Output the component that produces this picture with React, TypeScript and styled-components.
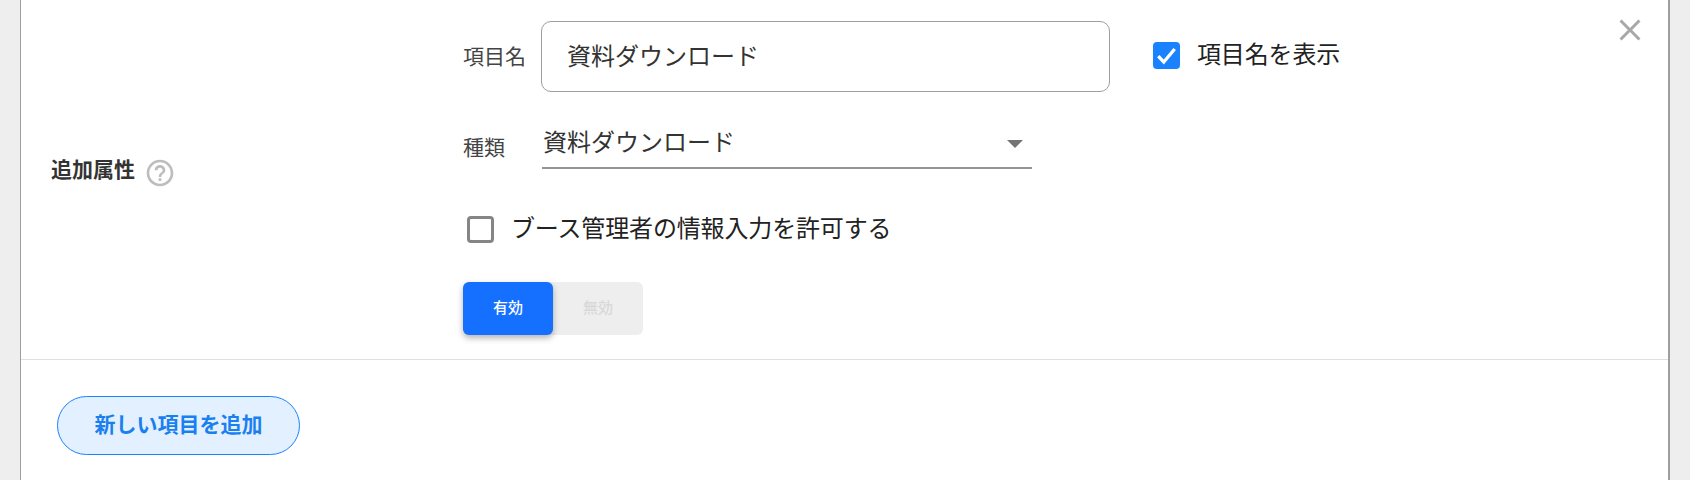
import React from 'react'
import styled, { createGlobalStyle } from 'styled-components'
import { MdClose, MdHelpOutline } from 'react-icons/md'

const GlobalStyle = createGlobalStyle`
  html, body {
    margin: 0;
    padding: 0;
    background: #eeeeee;
    font-family: "Noto Sans CJK JP", "Liberation Sans", sans-serif;
  }
`

const Page = styled.div`
  width: 1690px;
  height: 480px;
  overflow: hidden;
  padding: 0 20px;
  box-sizing: border-box;
`

const Card = styled.div`
  height: 100%;
  background: #fff;
  border-left: 1px solid #9e9e9e;
  border-right: 2px solid #9e9e9e;
`

const AttributeRow = styled.div`
  position: relative;
  display: grid;
  grid-template-columns: 442px 1fr;
  height: 360px;
  box-sizing: border-box;
  padding-top: 21px;
  border-bottom: 1px solid #e0e0e0;
`

const RowTitle = styled.div`
  display: flex;
  align-items: center;
  gap: 9px;
  padding: 0 0 35px 30px;
  font-size: 21px;
  font-weight: 700;
  color: #333;
`

const TitleText = styled.span`
  padding-bottom: 9px;
`

const HelpIcon = styled(MdHelpOutline)`
  font-size: 32px;
  color: #bdbdbd;
`

const Fields = styled.div`
  display: flex;
  flex-direction: column;
  align-items: flex-start;
`

const NameRow = styled.div`
  display: flex;
  align-items: center;
`

const FieldLabel = styled.label<{ $width: number; $shift: number }>`
  width: ${props => props.$width}px;
  flex: none;
  font-size: 21px;
  line-height: 28px;
  color: #444;
  transform: translateY(${props => props.$shift}px);
`

const NameInput = styled.div`
  width: 569px;
  height: 71px;
  box-sizing: border-box;
  display: flex;
  align-items: center;
  padding: 0 0 4px 25px;
  border: 1px solid #9e9e9e;
  border-radius: 10px;
  font-size: 24px;
  color: #333;
`

const CheckField = styled.div<{ $gap: number; $left: number; $lift: number }>`
  display: flex;
  align-items: center;
  gap: ${props => props.$gap}px;
  margin-left: ${props => props.$left}px;
  margin-top: ${props => -props.$lift}px;
  font-size: 24px;
  letter-spacing: -0.15px;
  color: #222;
`

const CheckText = styled.span`
  line-height: 30px;
  padding-bottom: 4px;
`

const Box = styled.span<{ $checked?: boolean }>`
  flex: none;
  width: 27px;
  height: 27px;
  box-sizing: border-box;
  display: flex;
  align-items: center;
  justify-content: center;
  border-radius: 4px;
  background: ${props => (props.$checked ? '#1a82ff' : '#fff')};
  border: ${props => (props.$checked ? 'none' : '3px solid #858585')};
`

const TypeRow = styled.div`
  display: flex;
  align-items: center;
  margin-top: 26px;
`

const TypeSelect = styled.div`
  width: 490px;
  height: 51px;
  box-sizing: border-box;
  display: flex;
  align-items: center;
  justify-content: space-between;
  padding: 0 9px 5px 1px;
  border-bottom: 2px solid #949494;
  font-size: 24px;
  color: #333;
`

const Arrow = styled.span`
  width: 0;
  height: 0;
  margin-top: 7px;
  border-left: 8px solid transparent;
  border-right: 8px solid transparent;
  border-top: 8px solid #757575;
`

const PermissionRow = styled.div`
  margin-top: 43px;
`

const Toggle = styled.div`
  display: flex;
  margin-top: 36px;
  border-radius: 6px;
  background: #eeeeee;
`

const ToggleOption = styled.div<{ $active?: boolean }>`
  width: 90px;
  height: 53px;
  box-sizing: border-box;
  padding-bottom: 4px;
  display: flex;
  align-items: center;
  justify-content: center;
  border-radius: 6px;
  font-size: 15px;
  font-weight: 500;
  background: ${props => (props.$active ? '#1570ff' : 'transparent')};
  color: ${props => (props.$active ? '#fff' : '#d8d8d8')};
  box-shadow: ${props => (props.$active ? '0 3px 6px rgba(0, 0, 0, 0.3)' : 'none')};
`

const CloseButton = styled(MdClose)`
  position: absolute;
  top: 12px;
  right: 20px;
  font-size: 36px;
  color: #a8a8a8;
`

const Footer = styled.div`
  padding: 36px 0 0 36px;
`

const AddButton = styled.button`
  width: 243px;
  height: 59px;
  padding: 0 0 5px;
  border: 1px solid #1a82ff;
  border-radius: 30px;
  background: #e3f0ff;
  color: #1a7fef;
  font-family: inherit;
  font-size: 21px;
  font-weight: 700;
`

const App: React.FC = () => {
  return (
    <Page>
      <GlobalStyle />
      <Card>
        <AttributeRow>
          <RowTitle>
            <TitleText>追加属性</TitleText>
            <HelpIcon />
          </RowTitle>
          <Fields>
            <NameRow>
              <FieldLabel $width={78} $shift={-2}>項目名</FieldLabel>
              <NameInput>資料ダウンロード</NameInput>
              <CheckField $gap={17} $left={43} $lift={3}>
                <Box $checked>
                  <svg width="23" height="23" viewBox="0 0 21 21">
                    <path d="M3 11l5 5.5L18 4.5" fill="none" stroke="#fff" strokeWidth="3" />
                  </svg>
                </Box>
                <CheckText>項目名を表示</CheckText>
              </CheckField>
            </NameRow>
            <TypeRow>
              <FieldLabel $width={79} $shift={2}>種類</FieldLabel>
              <TypeSelect>
                資料ダウンロード
                <Arrow />
              </TypeSelect>
            </TypeRow>
            <PermissionRow>
              <CheckField $gap={17} $left={4} $lift={0}>
                <Box />
                <CheckText>ブース管理者の情報入力を許可する</CheckText>
              </CheckField>
            </PermissionRow>
            <Toggle>
              <ToggleOption $active>有効</ToggleOption>
              <ToggleOption>無効</ToggleOption>
            </Toggle>
          </Fields>
          <CloseButton />
        </AttributeRow>
        <Footer>
          <AddButton>新しい項目を追加</AddButton>
        </Footer>
      </Card>
    </Page>
  )
}

export default App
